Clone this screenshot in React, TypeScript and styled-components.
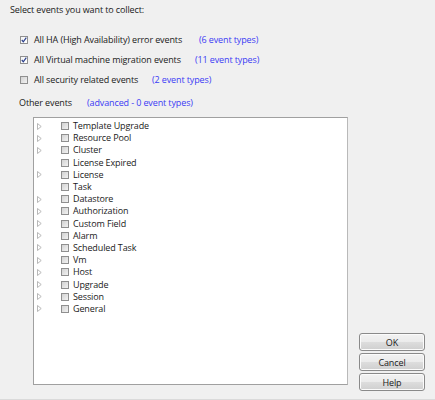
import { createGlobalStyle, styled } from 'styled-components'

const GlobalStyle = createGlobalStyle`
  html, body {
    margin: 0;
    padding: 0;
    background: #f0f0f0;
  }
  body {
    font-family: 'Open Sans', 'Noto Sans', sans-serif;
    font-size: 9px;
    letter-spacing: -0.12px;
    color: #1a1a1a;
  }
`

const Dialog = styled.div`
  width: 435px;
  height: 400px;
  box-sizing: border-box;
  padding: 4px 0 0 10px;
  display: flex;
  flex-direction: column;
  overflow: hidden;
  border-bottom: 1px solid #dadada;
`

const Heading = styled.div`
  height: 12px;
  line-height: 12px;
`

const Options = styled.div`
  display: flex;
  flex-direction: column;
  gap: 8px;
  margin-top: 18px;
  padding-left: 10px;
`

const OptionRow = styled.label`
  display: flex;
  align-items: center;
  height: 12px;
  line-height: 12px;
`

const Label = styled.span<{ $width: number; $gap?: number }>`
  width: ${props => props.$width}px;
  margin-left: ${props => props.$gap ?? 6}px;
  white-space: nowrap;
`

const Count = styled.span`
  color: #3b3bf5;
  white-space: nowrap;
`

const OtherRow = styled.div`
  display: flex;
  height: 12px;
  line-height: 12px;
  margin-top: 11px;
  padding-left: 9px;
`

const OtherLabel = styled.span`
  width: 68px;
`

const Body = styled.div`
  display: flex;
  align-items: flex-end;
  margin-top: 8px;
  padding-left: 23px;
`

const Tree = styled.div`
  width: 315px;
  height: 268px;
  box-sizing: border-box;
  background: #fff;
  border: 1px solid #a0a0a0;
  border-right-color: #b9b9b9;
  padding: 2px 0 0 3px;
`

const Node = styled.div`
  display: flex;
  align-items: center;
  height: 12.2px;
  line-height: 12px;
`

const Expander = styled.span`
  width: 24px;
  display: flex;
  align-items: center;
`

const Buttons = styled.div`
  display: flex;
  flex-direction: column;
  gap: 2px;
  margin-left: 11px;
  margin-bottom: -6px;
`

const Button = styled.button`
  width: 66px;
  height: 18px;
  box-sizing: border-box;
  padding: 0;
  font-family: inherit;
  font-size: 9px;
  letter-spacing: inherit;
  color: #1a1a1a;
  border: 1px solid #8a8a8a;
  border-radius: 3px;
  background: linear-gradient(#f2f2f2 0%, #ebebeb 50%, #dddddd 51%, #cfcfcf 100%);
  box-shadow: inset 0 0 0 1px #fbfbfb;
`

const Box = styled.span<{ $checked?: boolean }>`
  width: 8px;
  height: 8px;
  box-sizing: border-box;
  flex-shrink: 0;
  border: 1px solid #8f8f8f;
  background: ${props =>
    props.$checked
      ? 'linear-gradient(135deg, #f4f4f4, #ffffff)'
      : 'linear-gradient(135deg, #d2d2d2, #f2f2f2)'};
  display: flex;
  align-items: center;
  justify-content: center;
`

function CheckBox({ checked }: { checked?: boolean }) {
  return (
    <Box $checked={checked}>
      {checked && (
        <svg width="6" height="6" viewBox="0 0 6 6">
          <path d="M0.8 3 L2.3 4.8 L5.3 0.6" fill="none" stroke="#2a3f8c" strokeWidth="1.2" />
        </svg>
      )}
    </Box>
  )
}

function Triangle() {
  return (
    <svg width="5" height="7" viewBox="0 0 5 7">
      <path d="M0.5 0.5 L4.2 3.5 L0.5 6.5 Z" fill="#fff" stroke="#a6a6a6" strokeWidth="0.8" />
    </svg>
  )
}

const options = [
  { text: 'All HA (High Availability) error events', count: '(6 event types)', width: 165, checked: true },
  { text: 'All Virtual machine migration events', count: '(11 event types)', width: 161, checked: true },
  { text: 'All security related events', count: '(2 event types)', width: 118, checked: false },
]

const nodes = [
  { name: 'Template Upgrade', children: true },
  { name: 'Resource Pool', children: true },
  { name: 'Cluster', children: true },
  { name: 'License Expired', children: false },
  { name: 'License', children: true },
  { name: 'Task', children: false },
  { name: 'Datastore', children: true },
  { name: 'Authorization', children: true },
  { name: 'Custom Field', children: true },
  { name: 'Alarm', children: true },
  { name: 'Scheduled Task', children: true },
  { name: 'Vm', children: true },
  { name: 'Host', children: true },
  { name: 'Upgrade', children: true },
  { name: 'Session', children: true },
  { name: 'General', children: true },
]

export default function App() {
  return (
    <>
      <GlobalStyle />
      <Dialog>
        <Heading>Select events you want to collect:</Heading>
        <Options>
          {options.map(o => (
            <OptionRow key={o.text}>
              <CheckBox checked={o.checked} />
              <Label $width={o.width}>{o.text}</Label>
              <Count>{o.count}</Count>
            </OptionRow>
          ))}
        </Options>
        <OtherRow>
          <OtherLabel>Other events</OtherLabel>
          <Count>(advanced - 0 event types)</Count>
        </OtherRow>
        <Body>
          <Tree>
            {nodes.map(n => (
              <Node key={n.name}>
                <Expander>{n.children && <Triangle />}</Expander>
                <CheckBox />
                <Label $width={200} $gap={4}>{n.name}</Label>
              </Node>
            ))}
          </Tree>
          <Buttons>
            <Button>OK</Button>
            <Button>Cancel</Button>
            <Button>Help</Button>
          </Buttons>
        </Body>
      </Dialog>
    </>
  )
}
